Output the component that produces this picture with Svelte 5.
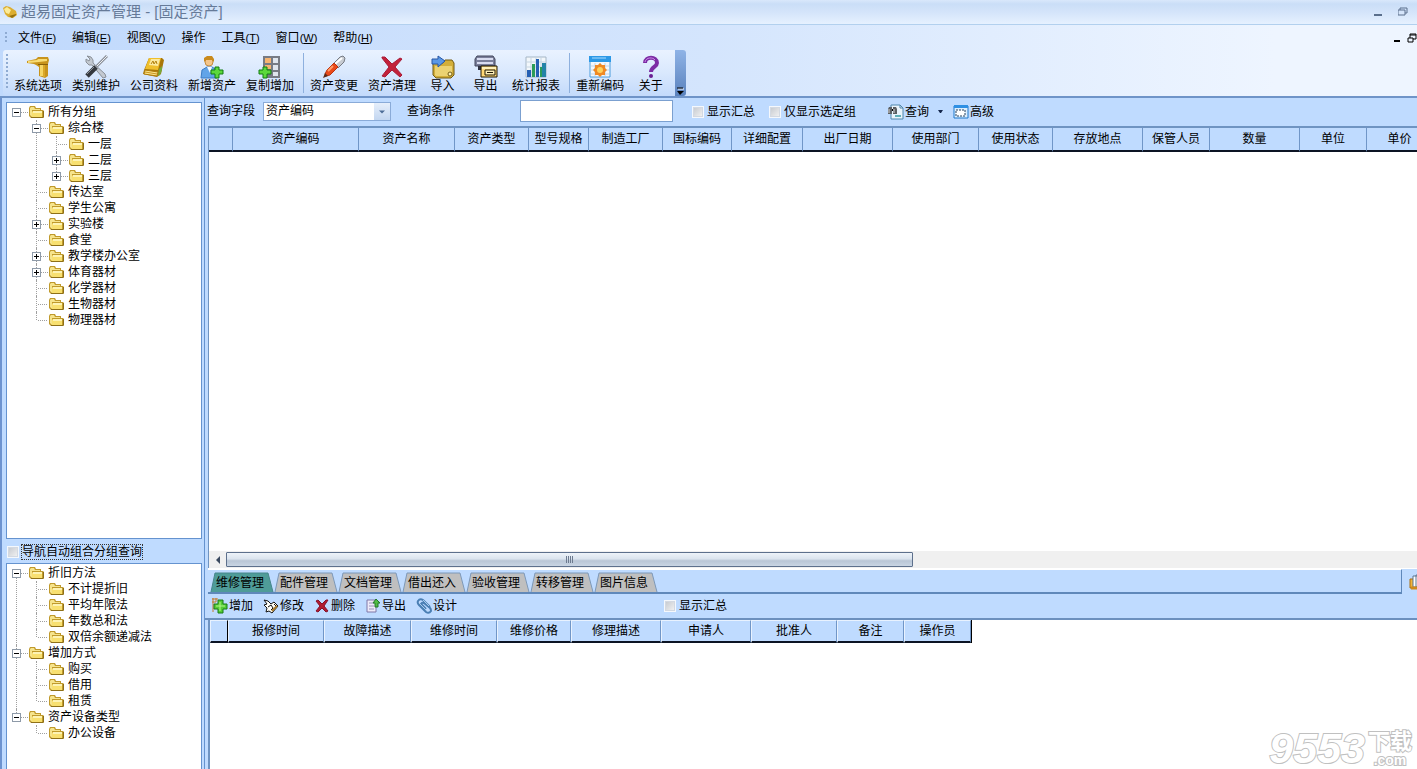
<script>
  const menus = [
    ['文件', 'F'],
    ['编辑', 'E'],
    ['视图', 'V'],
    ['操作', ''],
    ['工具', 'T'],
    ['窗口', 'W'],
    ['帮助', 'H']
  ];

  const tools = [
    [
      ['hammer', '系统选项'],
      ['wrench', '类别维护'],
      ['book', '公司资料'],
      ['user', '新增资产'],
      ['copy', '复制增加']
    ],
    [
      ['pen', '资产变更'],
      ['cross', '资产清理'],
      ['import', '导入'],
      ['export', '导出'],
      ['chart', '统计报表']
    ],
    [
      ['calendar', '重新编码'],
      ['help', '关于']
    ]
  ];

  const groups = [
    {
      name: '所有分组',
      open: true,
      children: [
        {
          name: '综合楼',
          open: true,
          children: [{ name: '一层' }, { name: '二层', closed: true }, { name: '三层', closed: true }]
        },
        { name: '传达室' },
        { name: '学生公寓' },
        { name: '实验楼', closed: true },
        { name: '食堂' },
        { name: '教学楼办公室', closed: true },
        { name: '体育器材', closed: true },
        { name: '化学器材' },
        { name: '生物器材' },
        { name: '物理器材' }
      ]
    }
  ];

  const types = [
    {
      name: '折旧方法',
      open: true,
      children: [{ name: '不计提折旧' }, { name: '平均年限法' }, { name: '年数总和法' }, { name: '双倍余额递减法' }]
    },
    { name: '增加方式', open: true, children: [{ name: '购买' }, { name: '借用' }, { name: '租赁' }] },
    { name: '资产设备类型', open: true, children: [{ name: '办公设备' }] }
  ];

  const assetCols = [
    ['', 24],
    ['资产编码', 126],
    ['资产名称', 96],
    ['资产类型', 74],
    ['型号规格', 60],
    ['制造工厂', 74],
    ['国标编码', 69],
    ['详细配置', 71],
    ['出厂日期', 90],
    ['使用部门', 86],
    ['使用状态', 74],
    ['存放地点', 90],
    ['保管人员', 67],
    ['数量', 90],
    ['单位', 67],
    ['单价', 66]
  ];

  const repairCols = [
    ['', 18],
    ['报修时间', 96],
    ['故障描述', 87],
    ['维修时间', 86],
    ['维修价格', 74],
    ['修理描述', 90],
    ['申请人', 90],
    ['批准人', 86],
    ['备注', 67],
    ['操作员', 67]
  ];

  const tabs = ['维修管理', '配件管理', '文档管理', '借出还入', '验收管理', '转移管理', '图片信息'];
  let tab = $state(0);

  const actions = [
    ['add', '增加'],
    ['edit', '修改'],
    ['delete', '删除'],
    ['out', '导出'],
    ['clip', '设计']
  ];

  const total = (cols) => cols.reduce((sum, c) => sum + c[1], 0);
</script>

{#snippet bigIcon(name)}
  <svg class="big" viewBox="0 0 24 24" aria-hidden="true">
    {#if name === 'hammer'}
      <path d="M1 6l9-2 2-2h10l1 3-1 4v12l-3 2-6-2V12l-3-2-2-1-7-1z" fill="#c8941c" />
      <path d="M2 6l9-1 1-1h9v2l-8 1-11 1z" fill="#f8dc74" />
      <path d="M14 9h3v12h-3z" fill="#f6d664" />
      <path d="M17 9h2v13h-2z" fill="#dba828" />
      <path d="M12 9h10v1H12z" fill="#8a6008" />
    {:else if name === 'wrench'}
      <path d="M23 1L12 12" stroke="#8d939c" stroke-width="3" />
      <path d="M23 1L13 11" stroke="#eceef2" stroke-width="1" />
      <path d="M3 1l4 1 2 3 0 3 12 11 1 3-3 1L8 10l-3 0-3-3 0-3 3 2 1-2z" fill="#c3c9d1" stroke="#8a9098" />
      <path d="M12 12l-9 9" stroke="#34383e" stroke-width="5" />
      <path d="M10 12l-7 7" stroke="#8b9198" stroke-width="1" />
    {:else if name === 'book'}
      <path d="M7 3h13l2 2-3 14-4 3-14-3 1-4z" fill="#a97608" />
      <path d="M7 3h12l-3 12-13-1z" fill="#efbf2c" />
      <path d="M9 4h9l-2 7-9-1z" fill="#fbe9a0" />
      <path d="M9 9l2-3 1 3 2-3 1 3" fill="none" stroke="#b3820e" />
      <path d="M3 15l13 2-1 4-13-2z" fill="#fbe48c" stroke="#b07c0a" />
      <path d="M3 17l12 2" stroke="#c8941c" />
      <path d="M17 14l3-3v4l-2 5-2 1z" fill="#76a83a" />
    {:else if name === 'user'}
      <path d="M1 23l1-8 5-3h5l5 3v8z" fill="#62a4e8" stroke="#3c7cc4" />
      <path d="M7 12l3 6 2-6z" fill="#f5fafe" />
      <circle cx="9" cy="7" r="4" fill="#f4c58a" stroke="#c48c40" />
      <path d="M4 7V3l3-2h5l2 3v3l-2-2H6z" fill="#c98a1c" />
      <path d="M15 12h4v3h4v4h-4v4h-4v-4h-4v-4h4z" fill="#5bd83c" stroke="#137c12" />
    {:else if name === 'copy'}
      <path d="M5 1h17v22H5z" fill="#777b84" />
      <path d="M7 3h6v5H7zM7 10h6v4H7z" fill="#f6b470" />
      <path d="M15 3h5v5h-5zM15 10h5v5h-5zM15 17h5v4h-5z" fill="#dfe5ed" />
      <path d="M5 12h4v3h4v4H9v4H5v-4H1v-4h4z" fill="#5bd83c" stroke="#137c12" />
    {:else if name === 'pen'}
      <path d="M12 8l6-6 3-1 2 2-1 4-6 6z" fill="#c8ccd2" stroke="#767b84" />
      <path d="M13 9l7-6" stroke="#fff" stroke-width="2" />
      <path d="M12 8l4 4-8 8-4 1-1-2 2-4z" fill="#ea4a1a" stroke="#b93210" />
      <path d="M11 11l-5 5" stroke="#ff9d6a" stroke-width="2" />
      <path d="M3 18l3 3-5 2z" fill="#5b2a18" />
    {:else if name === 'cross'}
      <path d="M2 2l3 0 7 7 8-6 2 1-7 8 7 8-2 2-8-7-7 7-3-1 7-9-7-9z" fill="#c2213a" stroke="#a81c38" />
    {:else if name === 'import'}
      <path d="M2 8h10l2-3h7l2 3v12l-3 3H5l-3-3z" fill="#d3ae39" stroke="#725b14" />
      <path d="M4 11h17v8l-2 2H5l-1-1z" fill="#ecd272" />
      <path d="M1 4h6V1l7 5-7 6V9H1z" fill="#5a98e6" stroke="#2856a4" />
      <circle cx="19" cy="19" r="2" fill="#fff3b4" stroke="#725b14" />
    {:else if name === 'export'}
      <path d="M3 1h16l2 3v7H1V4z" fill="#7a7f9a" stroke="#43475c" />
      <path d="M3 4h16M3 8h16" stroke="#d8dcf0" stroke-width="2" />
      <path d="M4 11h6v4H4z" fill="#2f3140" />
      <path d="M7 11h16v11H7z" fill="#ffd877" stroke="#1d1604" />
      <path d="M8 12h14v2H8z" fill="#fff0b8" />
      <path d="M11 15h10v5H11z" fill="#fff0b8" stroke="#1d1604" />
      <path d="M13 17h6v1h-6z" fill="#1d1604" />
    {:else if name === 'chart'}
      <path d="M2 2h20v20H2z" fill="#f2f7fb" stroke="#a5b6c6" />
      <path d="M2 7h20M2 12h20M2 17h20M7 2v20M12 2v20M17 2v20" stroke="#c5d4e2" />
      <path d="M3 15h4v7H3zM12 4h3v18h-3z" fill="#2560b4" />
      <path d="M8 9h3v13H8zM16 12h2v10h-2z" fill="#2c9c58" />
      <path d="M18 8h4v14h-4z" fill="#2383a8" />
    {:else if name === 'calendar'}
      <path d="M2 2h20v20H2z" fill="#f4f8fd" stroke="#4a9cdc" />
      <path d="M1 1h22v6H1z" fill="#2c98e6" />
      <path d="M4 3h14" stroke="#a8dcff" />
      <path d="M3 11h18M3 15h18M3 19h18M7 8v13M12 8v13M17 8v13" stroke="#c3d4e8" />
      <path d="M12 8l2 2 3 0 0 3 2 2-2 2 0 3-3 0-2 2-2-2-3 0 0-3-2-2 2-2 0-3 3 0z" fill="#f08a24" />
      <circle cx="12" cy="15" r="3" fill="#ffd25c" />
    {:else if name === 'help'}
      <path d="M6 8c0-7 12-7 12 0 0 4-6 4-6 9" fill="none" stroke="#7c2ca4" stroke-width="4" />
      <path d="M6 7c1-5 8-5 10-2" fill="none" stroke="#cf8cec" stroke-width="1" />
      <circle cx="12" cy="21" r="2" fill="#6a1e92" />
    {/if}
  </svg>
{/snippet}

{#snippet smallIcon(name)}
  <svg class="small" viewBox="0 0 16 16" aria-hidden="true">
    {#if name === 'app'}
      <path d="M1 4l3-2 4 1 6 4 1 4-4 3-5-1-3-3z" fill="#dcae30" />
      <path d="M2 5l3-2 4 3-2 4-3-1z" fill="#fbeb98" />
      <path d="M7 12l7-2 0 1-4 3z" fill="#96700e" />
    {:else if name === 'folder'}
      <path d="M1 12V4l1-2h5l1 2h5v2h2l1 1v6l-1 1H3z" fill="#c09a2c" />
      <path d="M2 11V4l1-1h3l1 2h5v1H4v7z" fill="#f6e48c" />
      <path d="M5 7h9v6H4V8z" fill="#f8e070" />
      <path d="M5 7h9v2H5z" fill="#fdf3b4" />
      <path d="M3 14h12l1-1V7l-1 0v6H3z" fill="#8e7018" />
    {:else if name === 'find'}
      <path d="M3 1h9l3 3v11H3z" fill="#eaf4fc" stroke="#4f86ac" />
      <path d="M12 1v3h3" fill="none" stroke="#4f86ac" />
      <path d="M7 12h6" stroke="#62b0b8" stroke-width="2" />
      <path d="M0 5l1-2h3v7H0zM5 3h3l1 2v5H5z" fill="#5b5f63" />
      <path d="M1 5v4M6 5v4" stroke="#d8d8d8" />
      <path d="M4 5h1v2H4z" />
    {:else if name === 'window'}
      <path d="M1 2h14v12H1z" fill="#dceefe" stroke="#1f78cc" />
      <path d="M1 1h14v3H1z" fill="#2e90e4" />
      <path d="M3 6h9v6H3z" fill="#fff" stroke="#24405e" stroke-dasharray="2 1" />
    {:else if name === 'add'}
      <path d="M0 1h6M0 4h4M1 0v14M4 0v4" fill="none" stroke="#c47a2c" />
      <path d="M6 2h5v4h4v5h-4v4H6v-4H2V6h4z" fill="#55cc34" stroke="#187a18" />
      <path d="M8 4v9M4 8h9" stroke="#b4f58a" />
    {:else if name === 'edit'}
      <path d="M1 2l4 1 3 3 3-2 4 4-6 7-3-2-3 1 1-4-3-3 3-1z" fill="#fffdf5" stroke="#111" />
      <path d="M5 9l3-2 2 3-2 2M11 6l3 3" fill="none" stroke="#111" />
      <path d="M9 13l5-5" stroke="#a67a2c" stroke-width="2" />
    {:else if name === 'delete'}
      <path d="M2 3l2-1 4 4 4-4 2 0-4 6 4 5-2 1-4-4-4 4-2-1 4-5z" fill="#b01c30" stroke="#86102a" />
    {:else if name === 'out'}
      <path d="M2 2h9v12H2z" fill="#eeeaf8" stroke="#7f78a8" />
      <path d="M4 5h5M4 8h5M4 11h5" stroke="#9890bc" />
      <path d="M11 1l4 4h-2v4h-3V5H8z" fill="#50bc44" stroke="#237828" />
    {:else if name === 'clip'}
      <path d="M14 9L7 2Q4 0 2 3q-1 2 1 4l7 7q3 2 5-1 0-2-1-3L8 5q-2-1-3 1l5 5" fill="none" stroke="#4a7fb4" stroke-width="2" />
      <path d="M3 5l8 8M7 2l6 6" stroke="#a8cceb" />
    {:else if name === 'files'}
      <path d="M1 5h4v9H1z" fill="#f0b43c" stroke="#a86c10" />
      <path d="M4 2h6v11H4zM7 1h8v12H7z" fill="#fff" stroke="#5a7590" />
      <path d="M9 4h4M9 7h4M9 10h4" stroke="#46a054" />
      <path d="M2 14h13" stroke="#d08a1c" stroke-width="3" />
    {/if}
  </svg>
{/snippet}

{#snippet tree(nodes)}
  <ul>
    {#each nodes as node}
      <li>
        <div class="node">
          <span class="knob">
            {#if node.open || node.closed}
              <svg viewBox="0 0 9 9" aria-hidden="true">
                <path d="M0 0h9v9H0z" fill="#8e9aa8" />
                <path d="M1 1h7v7H1z" fill="#fff" />
                <path d="M2 4h5v1H2z" />
                {#if node.closed}<path d="M4 2h1v5H4z" />{/if}
              </svg>
            {/if}
          </span>
          {@render smallIcon('folder')}
          <span class="name">{node.name}</span>
        </div>
        {#if node.children}{@render tree(node.children)}{/if}
      </li>
    {/each}
  </ul>
{/snippet}

{#snippet grid(cols, kind)}
  <table class={kind} style:width="{total(cols)}px">
    <colgroup>
      {#each cols as col}<col style:width="{col[1]}px" />{/each}
    </colgroup>
    <thead>
      <tr>
        {#each cols as col}<th>{col[0]}</th>{/each}
      </tr>
    </thead>
  </table>
{/snippet}

<div class="app">
  <header class="titlebar">
    {@render smallIcon('app')}
    <h1>超易固定资产管理 - [固定资产]</h1>
    <div class="winbtns">
      <button aria-label="最小化"><svg viewBox="0 0 10 10"><path d="M1 8h8" stroke="#5a6f8c" stroke-width="2" /></svg></button>
      <button aria-label="还原"><svg viewBox="0 0 10 10"><path d="M0 3h7v5H0zM2 3V1h7v5H7" fill="none" stroke="#5a6f8c" /></svg></button>
    </div>
  </header>

  <div class="top">
    <nav class="menu">
      <span class="grip"></span>
      {#each menus as [label, key]}
        <button>{label}{#if key}<span class="key">(<u>{key}</u>)</span>{/if}</button>
      {/each}
      <div class="childbtns">
        <button aria-label="最小化窗口"><svg viewBox="0 0 10 10"><path d="M2 8h6" stroke="#000" stroke-width="2" /></svg></button>
        <button aria-label="还原窗口"><svg viewBox="0 0 10 10"><path d="M1 5h5v4H1zM3 5V1h6v5H6M3 2h6" fill="none" stroke="#000" /></svg></button>
      </div>
    </nav>

    <div class="toolbar">
      <span class="grip"></span>
      {#each tools as group, i}
        {#if i > 0}<span class="sep"></span>{/if}
        {#each group as [icon, label]}
          <button class="tool">{@render bigIcon(icon)}<span>{label}</span></button>
        {/each}
      {/each}
      <button class="more" aria-label="更多">
        <svg viewBox="0 0 9 9"><path d="M2 2h6" stroke="#fff" /><path d="M1 1h6" stroke="#000" /><path d="M1 4h7L4 8z" /></svg>
      </button>
    </div>
  </div>

  <div class="body">
    <aside>
      <div class="panel groups">{@render tree(groups)}</div>
      <label class="auto"><input type="checkbox" /><span>导航自动组合分组查询</span></label>
      <div class="panel types">{@render tree(types)}</div>
    </aside>

    <main>
      <div class="query">
        <label for="field">查询字段</label>
        <div class="combo">
          <select id="field"><option>资产编码</option></select>
          <svg viewBox="0 0 16 16" aria-hidden="true"><path d="M5 7h6L8 10z" fill="#4d6c96" /></svg>
        </div>
        <label for="term">查询条件</label>
        <input id="term" type="text" />
        <label class="check"><input type="checkbox" />显示汇总</label>
        <label class="check"><input type="checkbox" />仅显示选定组</label>
        <button class="find">{@render smallIcon('find')}查询<svg class="arrow" viewBox="0 0 7 4" aria-hidden="true"><path d="M1 0h5L4 3H3z" fill="#13264c" /></svg></button>
        <button>{@render smallIcon('window')}高级</button>
      </div>

      <div class="assets">{@render grid(assetCols, 'asset')}</div>

      <div class="scroll">
        <button aria-label="向左"><svg viewBox="0 0 8 8"><path d="M6 0v8L2 4z" fill="#3b4a60" /></svg></button>
        <div class="track"><div class="thumb"><i></i><i></i><i></i><i></i></div></div>
      </div>

      <div class="tabrow">
        <div class="tabs" role="tablist">
          {#each tabs as name, i}
            <button role="tab" aria-selected={tab === i} onclick={() => (tab = i)}>
              <svg viewBox="0 0 66 20" preserveAspectRatio="none" aria-hidden="true">
                <path d="M3 20L7 1h53l5 19" />
              </svg>
              <span>{name}</span>
            </button>
          {/each}
        </div>
        <button class="files" aria-label="文件">{@render smallIcon('files')}</button>
      </div>

      <div class="actions">
        {#each actions as [icon, label]}
          <button>{@render smallIcon(icon)}{label}</button>
        {/each}
        <label class="check"><input type="checkbox" />显示汇总</label>
      </div>

      <div class="repairs">{@render grid(repairCols, 'repair')}</div>
    </main>
  </div>

  <div class="mark" aria-hidden="true">
    <span class="num">9553</span>
    <span class="site"><span class="dl">下载</span><span class="com">.com</span></span>
  </div>
</div>

<style>
  :global(body) {
    background: #bfdbff;
  }

  .app {
    display: flex;
    flex-direction: column;
    min-height: 100vh;
    overflow: hidden;
    position: relative;
    font-family: "Liberation Sans", "Noto Sans CJK SC", sans-serif;
    font-size: 12px;
    line-height: 16px;
    color: #000;
  }

  button {
    display: flex;
    align-items: center;
    padding: 0;
    border: 0;
    background: none;
    font: inherit;
    color: inherit;
    white-space: nowrap;
  }

  svg {
    display: block;
    flex: none;
  }

  .small {
    width: 16px;
    height: 16px;
  }

  .big {
    width: 24px;
    height: 24px;
  }

  .titlebar {
    display: flex;
    align-items: center;
    height: 24px;
    padding: 0 9px 0 2px;
    border-bottom: 1px solid #b2d0ee;
    background: linear-gradient(#d9e8fb, #cadef7 4px, #d4e4fa 12px, #e6f1ff);
  }

  h1 {
    flex: 1;
    margin: 0 0 0 3px;
    font-size: 15px;
    font-weight: normal;
    line-height: 24px;
    color: #667a98;
  }

  .winbtns {
    display: flex;
    gap: 15px;
  }

  .winbtns svg,
  .childbtns svg {
    width: 10px;
    height: 10px;
  }

  .top {
    background: linear-gradient(90deg, #c0d9fc, #d4e5fd 50%, #eef5ff 90%);
    border-bottom: 2px solid #6f94c8;
  }

  .menu {
    display: flex;
    align-items: center;
    height: 25px;
    padding-left: 5px;
  }

  .menu > button {
    padding: 0 8px;
  }

  .key {
    font-size: 11px;
  }

  .grip {
    width: 2px;
    height: 12px;
    margin-right: 3px;
    background: repeating-linear-gradient(#8fabd2 0 2px, transparent 2px 4px);
  }

  .childbtns {
    display: flex;
    gap: 5px;
    margin: 0 0 0 auto;
  }

  .toolbar {
    display: flex;
    align-items: stretch;
    width: max-content;
    height: 46px;
    margin-left: 3px;
    border-radius: 3px;
    background: linear-gradient(#e9f2ff, #d9e8fd 50%, #c3dafb);
  }

  .toolbar .grip {
    height: 36px;
    margin: 4px 1px 0 3px;
  }

  .tool {
    flex-direction: column;
    min-width: 43px;
    padding: 5px 5px 0;
  }

  .tool span {
    line-height: 14px;
  }

  .sep {
    width: 1px;
    margin: 3px 1px 3px 4px;
    background: #8eb0de;
  }

  .more {
    width: 11px;
    align-items: flex-end;
    justify-content: center;
    margin-left: 3px;
    background: linear-gradient(#8fb3e6, #5a82bd);
    border-radius: 0 3px 3px 0;
  }

  .more svg {
    width: 9px;
    height: 9px;
  }

  .body {
    flex: 1;
    display: flex;
    border-left: 2px solid #6d93cf;
  }

  aside {
    display: flex;
    flex-direction: column;
    width: 196px;
    flex: none;
    padding: 4px 2px 0 4px;
    border-right: 1px solid #6593cf;
  }

  .panel {
    border: 1px solid #6593cf;
    padding: 1px 0;
    background: #fff;
    overflow: hidden;
  }

  .groups {
    flex: 434 1 0;
  }

  .types {
    flex: 203 1 0;
    border-bottom: 0;
  }

  .auto {
    display: flex;
    align-items: center;
    height: 22px;
    padding: 2px 0 0 1px;
    gap: 3px;
  }

  .auto span {
    height: 14px;
    line-height: 14px;
    outline: 1px dotted #333;
  }

  input[type='checkbox'] {
    appearance: none;
    width: 12px;
    height: 12px;
    margin: 0;
    border: 1px solid #f5f8fc;
    background: linear-gradient(135deg, #c4c8ce, #f4f4f4);
    outline: 1px solid #d3d9e2;
    outline-offset: -2px;
  }

  ul {
    margin: 0;
    padding: 0;
    list-style: none;
  }

  li {
    position: relative;
  }

  li ul {
    margin-left: 20px;
  }

  li::before {
    content: '';
    position: absolute;
    left: 9px;
    top: 0;
    bottom: 0;
    border-left: 1px dotted #a0a0a0;
  }

  li:last-child::before {
    bottom: auto;
    height: 8px;
  }

  .panel > ul > li:first-child::before {
    top: 8px;
  }

  .panel > ul > li:only-child::before {
    height: 0;
  }

  .node {
    position: relative;
    display: flex;
    align-items: center;
    height: 16px;
    padding-left: 5px;
  }

  .knob {
    width: 16px;
    height: 9px;
    background: linear-gradient(90deg, #a0a0a0 50%, transparent 50%) 5px 4px / 2px 1px repeat-x;
  }

  .knob:empty {
    margin-left: 5px;
    width: 11px;
  }

  .knob svg {
    width: 9px;
    height: 9px;
  }

  .name {
    margin-left: 4px;
  }

  main {
    flex: 1;
    min-width: 0;
    display: flex;
    flex-direction: column;
  }

  .query {
    display: flex;
    align-items: center;
    height: 28px;
    padding: 0 0 2px 2px;
    box-sizing: border-box;
  }

  .combo {
    position: relative;
    margin: 0 16px 0 8px;
  }

  .combo svg {
    position: absolute;
    right: 1px;
    top: 1px;
    width: 16px;
    height: 17px;
    background: linear-gradient(#e6effb, #c3d6f0);
    pointer-events: none;
  }

  select {
    appearance: none;
    display: block;
    width: 128px;
    height: 19px;
    padding: 0 0 0 2px;
    border: 1px solid #8aabd8;
    border-radius: 0;
    background: #fff;
    font: inherit;
    color: #000;
  }

  input[type='text'] {
    width: 153px;
    height: 22px;
    box-sizing: border-box;
    margin: 0 19px 0 65px;
    border: 1px solid #7ba0d0;
    background: #fff;
    font: inherit;
  }

  .check {
    display: flex;
    align-items: center;
    gap: 3px;
    margin-right: 14px;
    white-space: nowrap;
  }

  .query .check,
  .query button {
    padding-top: 2px;
  }

  .find {
    margin: 0 9px 0 18px;
  }

  .query .small {
    margin-right: 1px;
  }

  .arrow {
    width: 7px;
    height: 4px;
    margin-left: 8px;
  }

  .assets {
    flex: 424 1 0;
    margin-left: 3px;
    border-top: 2px solid #6f94c2;
    border-left: 1px solid #6f94c2;
    background: #fff;
    overflow: hidden;
  }

  table {
    table-layout: fixed;
    border-collapse: separate;
    border-spacing: 0;
  }

  th {
    height: 22px;
    padding: 0;
    font-weight: normal;
    background: #bfdbff;
    border-right: 1px solid #7096c8;
    border-bottom: 2px solid #0c1424;
    white-space: nowrap;
  }

  .repair {
    border-right: 1px solid #000;
  }

  .repair th {
    height: 20px;
    border-left: 1px solid #e8f2ff;
    border-top: 1px solid #e8f2ff;
  }

  .repair th:first-child {
    border-right-color: #000;
  }

  .scroll {
    display: flex;
    height: 17px;
    margin-left: 3px;
    border-left: 1px solid #6f94c2;
    background: #f0f0f0;
  }

  .scroll button {
    width: 17px;
    justify-content: center;
  }

  .scroll button svg {
    width: 8px;
    height: 8px;
  }

  .track {
    flex: 1;
    display: grid;
    grid-template-columns: 687fr 504fr;
  }

  .thumb {
    display: flex;
    align-items: center;
    justify-content: center;
    gap: 1px;
    height: 15px;
    box-sizing: border-box;
    margin-top: 1px;
    border: 1px solid #5d708c;
    border-radius: 1px;
    background: linear-gradient(#eef3f9, #dbe4ee 45%, #b9c6d6 60%, #c9d5e3);
  }

  .thumb i {
    width: 1px;
    height: 7px;
    background: #6c7a8e;
  }

  .tabrow {
    display: flex;
    height: 26px;
    margin-left: 3px;
    border-top: 1px solid #fff;
    box-sizing: border-box;
  }

  .tabs {
    flex: 1;
    display: flex;
    padding-top: 2px;
    border-top: 1px solid #fff;
    border-right: 1px solid #5f88ba;
    border-bottom: 2px solid #5f88ba;
  }

  .tabs button {
    position: relative;
    width: 64px;
    justify-content: center;
  }

  .tabs button svg {
    position: absolute;
    left: 0;
    top: 0;
    width: 66px;
    height: 100%;
    fill: #bfbfbf;
    stroke: #7d98b8;
  }

  .tabs button[aria-selected='true'] svg {
    fill: #4f9c98;
    stroke: #47868c;
  }

  .tabs button span {
    position: relative;
    padding-top: 2px;
  }

  .files {
    width: 8px;
    margin-left: 7px;
    overflow: hidden;
  }

  .actions {
    display: flex;
    align-items: center;
    height: 24px;
    padding-left: 7px;
    gap: 10px;
    border-bottom: 2px solid #6c90be;
  }

  .actions .small {
    margin-right: 1px;
  }

  .actions .check {
    margin-left: 197px;
  }

  .repairs {
    flex: 149 1 0;
    margin-left: 3px;
    border-left: 2px solid #6f94c2;
    background: #fff;
    overflow: hidden;
  }

  .mark {
    position: absolute;
    right: 5px;
    bottom: 0;
    display: flex;
    align-items: center;
    gap: 3px;
    color: #fff;
    font-weight: bold;
    -webkit-text-stroke: 2px #c0c0c0;
    paint-order: stroke fill;
    pointer-events: none;
  }

  .num {
    font-size: 43px;
    font-style: italic;
    line-height: 42px;
  }

  .site {
    display: flex;
    flex-direction: column;
    align-items: center;
  }

  .dl {
    font-size: 22px;
    line-height: 23px;
  }

  .com {
    font-size: 14px;
    line-height: 14px;
  }
</style>
